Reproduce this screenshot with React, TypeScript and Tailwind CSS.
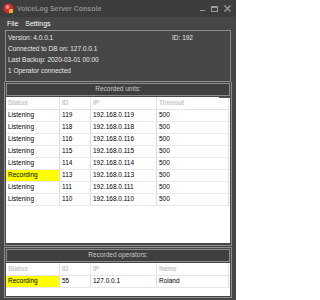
const units = [
  { status: 'Listening', id: 119, ip: '192.168.0.119', timeout: 500 },
  { status: 'Listening', id: 118, ip: '192.168.0.118', timeout: 500 },
  { status: 'Listening', id: 116, ip: '192.168.0.116', timeout: 500 },
  { status: 'Listening', id: 115, ip: '192.168.0.115', timeout: 500 },
  { status: 'Listening', id: 114, ip: '192.168.0.114', timeout: 500 },
  { status: 'Recording', id: 113, ip: '192.168.0.113', timeout: 500 },
  { status: 'Listening', id: 111, ip: '192.168.0.111', timeout: 500 },
  { status: 'Listening', id: 110, ip: '192.168.0.110', timeout: 500 },
];

const cols = 'grid grid-cols-[54px_31px_66px_72px]';

function HeaderRow({ last }: { last: string }) {
  return (
    <div className={`${cols} h-[13px] border-b border-[#e4e4e4] font-bold text-[#c6c6c6]`}>
      {['Status', 'ID', 'IP', last].map((h) => (
        <div key={h} className="flex items-center border-r border-[#e4e4e4] pl-[2px]">
          {h}
        </div>
      ))}
    </div>
  );
}

function Row({ cells, recording }: { cells: (string | number)[]; recording: boolean }) {
  return (
    <div className={`${cols} h-[12px] border-b border-[#e8e8e8] text-black`}>
      {cells.map((c, i) => (
        <div
          key={i}
          className={`flex items-center border-r border-[#dcdcdc] pl-[2px] ${i === 0 && recording ? 'bg-[#ffff00]' : ''}`}
        >
          {c}
        </div>
      ))}
    </div>
  );
}

function GroupBar({ label }: { label: string }) {
  return (
    <div className="flex h-[13px] items-center justify-center border border-[#8e8e8e] bg-[#3f3f3f] text-[#c8c8c8]">
      {label}
    </div>
  );
}

export default function App() {
  return (
    <div
      className="flex h-[300px] w-[236px] flex-col overflow-hidden bg-[#464646] text-[6.5px] leading-none"
      style={{ fontFamily: '"Liberation Sans", Arial, sans-serif' }}
    >
      {/* title bar */}
      <div className="flex h-[17px] items-center bg-[#3d3d3d] pl-[3px] pr-[5px]">
        <svg width="11" height="11" viewBox="0 0 11 11">
          <circle cx="5.5" cy="5.5" r="5" fill="#d42a2a" />
          <circle cx="4.5" cy="4" r="2" fill="#f08a8a" />
          <rect x="6" y="6" width="4" height="4" rx="1" fill="#e8b23a" />
        </svg>
        <span className="ml-[3px] text-[7px] font-bold text-[#8c8c8c]">VoiceLog Server Console</span>
        <div className="ml-auto flex items-center gap-[6px] text-[#9a9a9a]">
          <div className="mt-[4px] h-[1px] w-[5px] bg-[#9a9a9a]" />
          <div className="h-[6px] w-[7px] border border-t-[2px] border-[#9a9a9a]" />
          <svg width="7" height="7" viewBox="0 0 7 7">
            <path d="M0.5 0.5L6.5 6.5M6.5 0.5L0.5 6.5" stroke="#9a9a9a" strokeWidth="1.4" />
          </svg>
        </div>
      </div>

      {/* menu */}
      <div className="flex h-[13px] items-center gap-[7px] pl-[7px] text-[7px] text-white">
        <span>File</span>
        <span>Settings</span>
      </div>

      {/* info box */}
      <div className="mx-[5px] flex h-[52px] flex-col border border-[#8e8e8e] pl-[2px] pt-[2px] text-[#e6e6e6]">
        <div className="flex h-[11px] items-center justify-between pr-[37px]">
          <span>Version: 4.0.0.1</span>
          <span>ID: 192</span>
        </div>
        <div className="flex h-[11px] items-center">Connected to DB on: 127.0.0.1</div>
        <div className="flex h-[11px] items-center">Last Backup: 2020-03-01 00:00</div>
        <div className="flex h-[11px] items-center">1 Operator connected</div>
      </div>

      {/* recorded units */}
      <div className="mx-[4px] flex flex-col border-x border-b border-[#8e8e8e] px-px pb-[2px] pt-[1px]">
        <GroupBar label="Recorded units:" />
        <div className="relative mt-px flex h-[146px] flex-col bg-white">
          <div className="absolute right-0 top-0 h-[1px] w-[11px] bg-[#555555]" />
          <HeaderRow last="Timeout" />
          {units.map((u) => (
            <Row key={u.id} cells={[u.status, u.id, u.ip, u.timeout]} recording={u.status === 'Recording'} />
          ))}
        </div>
      </div>

      {/* recorded operators */}
      <div className="mx-[4px] mt-[1px] flex flex-col border border-[#8e8e8e] px-px pb-[1px] pt-px">
        <GroupBar label="Recorded operators:" />
        <div className="mt-px flex h-[33px] flex-col bg-white">
          <HeaderRow last="Name" />
          <Row cells={['Recording', 55, '127.0.0.1', 'Roland']} recording />
        </div>
      </div>
    </div>
  );
}
